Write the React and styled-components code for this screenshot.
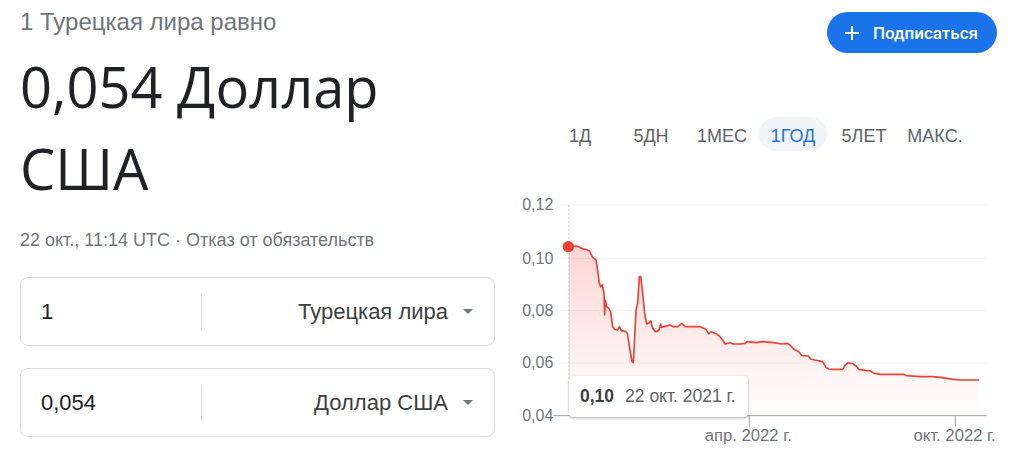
import React from 'react';
import styled, { createGlobalStyle } from 'styled-components';

const GlobalStyle = createGlobalStyle`
  html, body { margin: 0; padding: 0; background: #fff; }
  body { font-family: "Liberation Sans", Arial, sans-serif; color: #202124; }
`;

// chart coordinates are in a 3x space: page x = 500 + x / 3, page y = 180 + y / 3
const points = [
  [207,200],[230,198],[245,205],[262,210],[268,212],[278,232],[288,240],[292,265],[298,310],
  [302,320],[307,315],[312,340],[314,405],[316,360],[320,380],[326,385],[332,395],[338,440],
  [344,448],[352,450],[358,440],[364,452],[378,455],[382,460],[390,510],[396,545],[400,548],
  [404,470],[408,390],[413,370],[418,290],[422,290],[428,340],[434,400],[440,432],[448,428],
  [452,422],[458,445],[466,455],[476,452],[482,432],[484,442],[492,440],[510,435],[520,440],
  [534,440],[546,430],[556,440],[580,440],[600,440],[618,448],[626,462],[632,455],[640,458],
  [650,462],[660,470],[668,480],[675,492],[690,488],[700,492],[720,492],[736,490],[740,485],
  [770,488],[786,485],[820,488],[845,492],[862,490],[870,495],[882,508],[896,515],[906,527],
  [925,528],[932,537],[944,540],[968,545],[978,562],[986,567],[1000,568],[1028,568],[1036,555],
  [1044,548],[1060,552],[1070,560],[1076,568],[1100,572],[1110,572],[1122,580],[1142,583],
  [1160,583],[1210,583],[1220,587],[1260,590],[1300,590],[1320,592],[1360,598],[1380,600],[1437,600]
];

const grid = [
  { y: 75, label: '0,12' },
  { y: 235, label: '0,10' },
  { y: 392, label: '0,08' },
  { y: 549, label: '0,06' },
];

const tabs = ['1Д', '5ДН', '1МЕС', '1ГОД', '5ЛЕТ', 'МАКС.'];

const Page = styled.div`
  width: 1034px;
  height: 474px;
  box-sizing: border-box;
  padding: 0 20px;
  display: flex;
  overflow: hidden;
`;

const Left = styled.div`
  width: 475px;
  flex: none;
`;

const Eyebrow = styled.div`
  font-size: 24px;
  line-height: 26px;
  color: #70757a;
  margin-top: 9px;
`;

const Headline = styled.div`
  font-family: "Open Sans", sans-serif;
  font-size: 56px;
  line-height: 82px;
  color: #202124;
  margin-top: 10px;
`;

const Meta = styled.div`
  font-size: 18px;
  line-height: 22px;
  color: #70757a;
  margin-top: 20px;
`;

const Converter = styled.div`
  display: flex;
  flex-direction: column;
  gap: 22px;
  margin-top: 26px;
`;

const Field = styled.div`
  height: 69px;
  box-sizing: border-box;
  border: 1px solid #dadce0;
  border-radius: 8px;
  display: flex;
  align-items: center;
`;

const Amount = styled.div`
  width: 160px;
  padding-left: 20px;
  font-size: 22px;
  color: #202124;
`;

const Divider = styled.div`
  width: 1px;
  height: 36px;
  background: #dadce0;
`;

const Currency = styled.div`
  flex: 1;
  display: flex;
  justify-content: flex-end;
  align-items: center;
  gap: 15px;
  padding-right: 21px;
  font-size: 22px;
  color: #3c4043;
`;

const Caret = styled.span`
  width: 0;
  height: 0;
  border-left: 5px solid transparent;
  border-right: 5px solid transparent;
  border-top: 5px solid #70757a;
`;

const Right = styled.div`
  width: 514px;
  margin-left: 5px;
  flex: none;
  display: flex;
  flex-direction: column;
`;

const ButtonRow = styled.div`
  display: flex;
  justify-content: flex-end;
  padding: 12px 17px 0 0;
`;

const FollowButton = styled.button`
  height: 41px;
  border: none;
  border-radius: 21px;
  background: #1a73e8;
  color: #fff;
  font-family: Roboto, sans-serif;
  font-weight: 500;
  font-size: 17px;
  display: flex;
  align-items: center;
  gap: 13px;
  padding: 0 19px 0 17px;
`;

const Tabs = styled.div`
  display: flex;
  gap: 3px;
  padding-left: 46px;
  margin-top: 64px;
`;

const Tab = styled.div`
  width: 68px;
  height: 34px;
  box-sizing: border-box;
  padding-top: 5px;
  border-radius: 17px;
  display: flex;
  align-items: center;
  justify-content: center;
  white-space: nowrap;
  font-size: 18px;
  color: ${p => (p.$active ? '#1a73e8' : '#5f6368')};
  background: ${p => (p.$active ? '#f1f4f9' : 'transparent')};
`;

const ChartWrap = styled.div`
  position: relative;
  margin-top: 29px;
  height: 294px;
`;

const Tooltip = styled.div`
  position: absolute;
  left: 69px;
  top: 196px;
  height: 41px;
  box-sizing: border-box;
  padding: 0 12px 0 11px;
  display: flex;
  align-items: center;
  gap: 11px;
  background: #fff;
  border-radius: 4px;
  box-shadow: 0 1px 3px rgba(60, 64, 67, 0.3), 0 1px 2px rgba(60, 64, 67, 0.15);
  font-size: 17.5px;
  color: #5f6368;
  white-space: nowrap;
  b { color: #3c4043; }
`;

const Chart = () => {
  const line = points.map((p, i) => `${i ? 'L' : 'M'}${p[0]} ${p[1]}`).join(' ');
  const area = `${line} L1437 707 L207 707 Z`;
  return (
    <svg width="514" height="294" viewBox="0 0 1542 882">
      <defs>
        <linearGradient id="fade" x1="0" y1="0" x2="0" y2="1">
          <stop offset="0" stopColor="#ea4335" stopOpacity="0.22" />
          <stop offset="1" stopColor="#ea4335" stopOpacity="0" />
        </linearGradient>
      </defs>
      {grid.map(g => (
        <g key={g.label}>
          <line x1="165" x2="1460" y1={g.y} y2={g.y} stroke="#f1f3f4" strokeWidth="3" />
          <text x="160" y={g.y + 16} textAnchor="end" fontSize="48" fill="#70757a"
            fontFamily="Liberation Sans, Arial, sans-serif">{g.label}</text>
        </g>
      ))}
      <text x="160" y="723" textAnchor="end" fontSize="48" fill="#70757a"
        fontFamily="Liberation Sans, Arial, sans-serif">0,04</text>
      <path d={area} fill="url(#fade)" />
      <line x1="207" x2="207" y1="75" y2="600" stroke="#9aa0a6" strokeWidth="2" strokeDasharray="6 6" />
      <line x1="160" x2="1460" y1="707" y2="707" stroke="#9aa0a6" strokeWidth="3" />
      <line x1="748" x2="748" y1="707" y2="740" stroke="#9aa0a6" strokeWidth="3" />
      <line x1="1366" x2="1366" y1="707" y2="740" stroke="#9aa0a6" strokeWidth="3" />
      <text x="745" y="782" textAnchor="middle" fontSize="50" fill="#70757a"
        fontFamily="Liberation Sans, Arial, sans-serif">апр. 2022 г.</text>
      <text x="1364" y="782" textAnchor="middle" fontSize="50" fill="#70757a"
        fontFamily="Liberation Sans, Arial, sans-serif">окт. 2022 г.</text>
      <path d={line} fill="none" stroke="#ea4335" strokeWidth="5" strokeLinejoin="round" />
      <circle cx="205" cy="200" r="17" fill="#ea4335" />
    </svg>
  );
};

const PlusIcon = () => (
  <svg width="16" height="16" viewBox="0 0 16 16">
    <path d="M8 1v14M1 8h14" stroke="#fff" strokeWidth="2" />
  </svg>
);

export default function App() {
  return (
    <Page>
      <GlobalStyle />
      <Left>
        <Eyebrow>1 Турецкая лира равно</Eyebrow>
        <Headline>0,054 Доллар<br />США</Headline>
        <Meta>22 окт., 11:14 UTC · Отказ от обязательств</Meta>
        <Converter>
          <Field>
            <Amount>1</Amount>
            <Divider />
            <Currency>Турецкая лира<Caret /></Currency>
          </Field>
          <Field>
            <Amount>0,054</Amount>
            <Divider />
            <Currency>Доллар США<Caret /></Currency>
          </Field>
        </Converter>
      </Left>
      <Right>
        <ButtonRow>
          <FollowButton><PlusIcon />Подписаться</FollowButton>
        </ButtonRow>
        <Tabs>
          {tabs.map(t => <Tab key={t} $active={t === '1ГОД'}>{t}</Tab>)}
        </Tabs>
        <ChartWrap>
          <Chart />
          <Tooltip><b>0,10</b>22 окт. 2021 г.</Tooltip>
        </ChartWrap>
      </Right>
    </Page>
  );
}
